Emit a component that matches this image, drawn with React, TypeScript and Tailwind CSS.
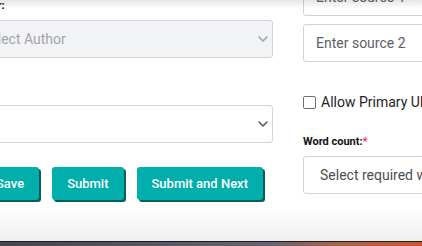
import React from "react";

function Chevron({ color }: { color: string }) {
    return (
        <svg width="10" height="6" viewBox="0 0 10 6" fill="none">
            <path d="M1 1l4 4 4-4" stroke={color} strokeWidth="1.6" strokeLinecap="round" strokeLinejoin="round" />
        </svg>
    );
}

function FakeSelect({ text, disabled, className = "" }: { text: string; disabled?: boolean; className?: string }) {
    return (
        <div
            className={`flex h-[38px] items-center justify-between border border-[#ced4da] rounded-[3px] pl-[13px] pr-[4px] text-[14px] ${
                disabled ? "bg-[#f2f3f5] text-[#a3a5a8]" : "bg-white text-[#495057]"
            } ${className}`}
        >
            <span className="whitespace-nowrap">{text}</span>
            <Chevron color={disabled ? "#a0a2a6" : "#555a60"} />
        </div>
    );
}

function TextInput({ placeholder, className = "" }: { placeholder: string; className?: string }) {
    return (
        <div className={`flex h-[38px] items-center border border-[#ced4da] rounded-[3px] bg-white px-[12px] text-[14px] text-[#5b6168] ${className}`}>
            <span className="whitespace-nowrap">{placeholder}</span>
        </div>
    );
}

function ActionButton({ label }: { label: string }) {
    return (
        <button className="h-[33px] rounded-[3px] bg-[#00aeab] px-[15px] text-[13px] font-medium text-white shadow-[2px_2px_0_#05605d] whitespace-nowrap">
            {label}
        </button>
    );
}

export default function App() {
    return (
        <div className="relative w-[422px] h-[246px] overflow-hidden bg-white font-['Roboto',sans-serif] flex flex-col">
            <div className="h-[241px] overflow-hidden bg-[linear-gradient(180deg,#ffffff_0px,#ffffff_208px,#eeeeee_241px)]">
                <div className="flex">
                    {/* left column */}
                    <div className="ml-[-32px] w-[305px] shrink-0 flex flex-col">
                        <label className="h-[12px] text-[11px] leading-[12px] font-bold text-[#111]">Author:</label>
                        <FakeSelect text="Select Author" disabled className="mt-[8px]" />
                        <FakeSelect text="" className="mt-[47px]" />
                        <div className="mt-[24px] pl-[13px] flex gap-[13px]">
                            <ActionButton label="Save" />
                            <ActionButton label="Submit" />
                            <ActionButton label="Submit and Next" />
                        </div>
                    </div>

                    {/* right column */}
                    <div className="ml-[30px] w-[200px] shrink-0 flex flex-col mt-[-22px]">
                        <TextInput placeholder="Enter source 1" />
                        <TextInput placeholder="Enter source 2" className="mt-[8px]" />
                        <div className="mt-[30px] flex items-center h-[21px] gap-[5px] text-[14px] text-[#212529]">
                            <span className="w-[13px] h-[13px] border border-[#6f6f6f] rounded-[2px] bg-white shrink-0" />
                            <span className="whitespace-nowrap">Allow Primary UI</span>
                        </div>
                        <label className="mt-[23px] h-[12px] text-[11px] leading-[12px] font-bold text-[#111] whitespace-nowrap">
                            Word count:<span className="text-[#e8344f]">*</span>
                        </label>
                        <div className="mt-[8px] flex h-[38px] items-center border border-[#ced4da] rounded-[3px] bg-white pl-[16px] text-[14px] text-[#495057]">
                            <span className="whitespace-nowrap">Select required word count</span>
                        </div>
                    </div>
                </div>
            </div>
            <div className="h-[5px] border-t border-[#1c1c1e] bg-[linear-gradient(90deg,#45454d,#5b5b67_45%,#6a6270_65%,#a9624a_80%,#c3592d)]" />
            <div className="pointer-events-none absolute inset-x-0 top-0 h-[9px] bg-gradient-to-b from-black/10 to-transparent" />
        </div>
    );
}
